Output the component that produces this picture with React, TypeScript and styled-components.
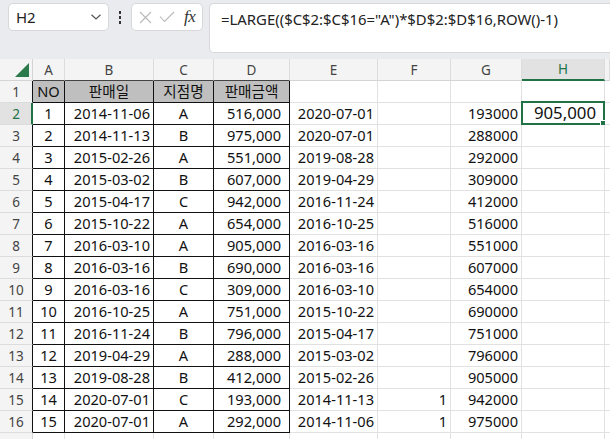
import React from "react";
import styled, { createGlobalStyle, css } from "styled-components";

const Global = createGlobalStyle`
  html, body { margin: 0; padding: 0; background: #ffffff; overflow: hidden; }
  body { font-family: "Noto Sans", "Noto Sans CJK KR", sans-serif; }
  * { box-sizing: border-box; }
`;

const GREEN = "#217346";
const COLS = "33px 32px 89px 60px 76px 88px 73px 71px 83px 1fr";

const Page = styled.div`
  width: 610px;
  height: 439px;
  overflow: hidden;
  background: #fff;
`;

const Toolbar = styled.div`
  height: 59px;
  background: #e9ebee;
  display: flex;
  align-items: flex-start;
  padding: 3px 0 0 8px;
`;

const NameBox = styled.div`
  width: 101px;
  height: 28px;
  background: #fff;
  border: 1px solid #d6d8db;
  border-radius: 5px;
  display: flex;
  align-items: center;
  justify-content: space-between;
  padding: 0 6px 0 7px;
  font-size: 15px;
  color: #222;
`;

const Dots = styled.div`
  width: 22px;
  height: 28px;
  display: flex;
  flex-direction: column;
  align-items: center;
  justify-content: center;
  gap: 2px;
`;

const Dot = styled.span`
  width: 2px;
  height: 3px;
  background: #333;
`;

const FxBox = styled.div`
  width: 72px;
  height: 28px;
  background: #fff;
  border: 1px solid #d6d8db;
  border-radius: 5px;
  display: flex;
  align-items: center;
  padding: 0 0 0 7px;
  gap: 7px;
`;

const Fx = styled.span`
  font-family: "Liberation Serif", "DejaVu Serif", serif;
  font-style: italic;
  font-size: 17px;
  color: #333;
  margin-left: 2px;
  letter-spacing: -0.5px;
`;

const FormulaBar = styled.div`
  margin-left: 6px;
  flex: 1;
  height: 50px;
  background: #fff;
  border: 1px solid #d6d8db;
  border-right: none;
  border-radius: 5px 0 0 5px;
  padding: 4px 0 0 11px;
  font-size: 14.9px;
  color: #222;
  white-space: nowrap;
  line-height: 22px;
`;

const Sheet = styled.div`
  display: flex;
  flex-direction: column;
`;

const Row = styled.div`
  display: grid;
  grid-template-columns: ${COLS};
  height: 22px;
`;

const ColHead = styled.div<{ $active?: boolean; $table?: boolean }>`
  background: ${(p) => (p.$active ? "#e2e2e2" : "#f4f4f4")};
  border-right: 1px solid #dcdcdc;
  border-bottom: 1px solid ${(p) => (p.$table ? "#444" : "#d4d4d4")};
  display: flex;
  align-items: center;
  justify-content: center;
  font-size: 13.5px;
  color: ${(p) => (p.$active ? GREEN : "#444")};
  ${(p) =>
    p.$active &&
    css`
      border-bottom: 2px solid ${GREEN};
    `}
`;

const Corner = styled.div`
  background: #f4f4f4;
  border-right: 1px solid #d4d4d4;
  border-bottom: 1px solid #d4d4d4;
  display: flex;
  align-items: flex-end;
  justify-content: flex-end;
  padding: 0 3px 3px 0;
`;

const RowHead = styled.div<{ $active?: boolean; $table?: boolean }>`
  background: ${(p) => (p.$active ? "#e2e2e2" : "#f4f4f4")};
  border-bottom: 1px solid #dcdcdc;
  border-right: ${(p) =>
    p.$active ? `2px solid ${GREEN}` : p.$table ? "1px solid #111" : "1px solid #d4d4d4"};
  display: flex;
  align-items: center;
  justify-content: center;
  font-size: 13.5px;
  color: ${(p) => (p.$active ? GREEN : "#444")};
  padding-left: ${(p) => (p.$active ? "1px" : "0")};
`;

type Align = "left" | "center" | "right";

const Cell = styled.div<{
  $align?: Align;
  $table?: boolean;
  $fill?: boolean;
  $money?: boolean;
  $big?: boolean;
}>`
  position: relative;
  border-right: 1px solid ${(p) => (p.$table ? "#111" : "#e1e1e1")};
  border-bottom: 1px solid ${(p) => (p.$table ? "#111" : "#e1e1e1")};
  background: ${(p) => (p.$fill ? "#bfbfbf" : "#fff")};
  display: flex;
  align-items: center;
  justify-content: ${(p) =>
    p.$align === "center" ? "center" : p.$align === "right" ? "flex-end" : "flex-start"};
  padding: 0 ${(p) => (p.$money ? "8px" : "3px")} 0 3px;
  font-size: ${(p) => (p.$big ? "16.8px" : "14.6px")};
  color: #111;
  white-space: nowrap;
  line-height: 1;
`;

const Selection = styled.div`
  position: absolute;
  left: -1px;
  top: -2px;
  right: -1px;
  bottom: -1px;
  border: 2px solid ${GREEN};
  pointer-events: none;
`;

const Handle = styled.div`
  position: absolute;
  right: -4px;
  bottom: -4px;
  width: 7px;
  height: 7px;
  background: ${GREEN};
  border: 1px solid #fff;
`;

const Chevron = () => (
  <svg width="12" height="8" viewBox="0 0 12 8">
    <path d="M1.5 1.8 L6 6 L10.5 1.8" fill="none" stroke="#555" strokeWidth="1.2" />
  </svg>
);

const XIcon = () => (
  <svg width="13" height="13" viewBox="0 0 13 13">
    <path d="M1 1 L12 12 M12 1 L1 12" stroke="#b9b9b9" strokeWidth="1.1" />
  </svg>
);

const CheckIcon = () => (
  <svg width="16" height="12" viewBox="0 0 16 12">
    <path d="M1 5.5 L5.5 10.5 L15 1" fill="none" stroke="#b9b9b9" strokeWidth="1.1" />
  </svg>
);

const Triangle = () => (
  <svg width="14" height="14" viewBox="0 0 14 14">
    <path d="M14 0 L14 14 L0 14 Z" fill="#2b7a4b" />
  </svg>
);

const data: [string, string, string, string, string, string, string][] = [
  ["1", "2014-11-06", "A", "516,000", "2020-07-01", "", "193000"],
  ["2", "2014-11-13", "B", "975,000", "2020-07-01", "", "288000"],
  ["3", "2015-02-26", "A", "551,000", "2019-08-28", "", "292000"],
  ["4", "2015-03-02", "B", "607,000", "2019-04-29", "", "309000"],
  ["5", "2015-04-17", "C", "942,000", "2016-11-24", "", "412000"],
  ["6", "2015-10-22", "A", "654,000", "2016-10-25", "", "516000"],
  ["7", "2016-03-10", "A", "905,000", "2016-03-16", "", "551000"],
  ["8", "2016-03-16", "B", "690,000", "2016-03-16", "", "607000"],
  ["9", "2016-03-16", "C", "309,000", "2016-03-10", "", "654000"],
  ["10", "2016-10-25", "A", "751,000", "2015-10-22", "", "690000"],
  ["11", "2016-11-24", "B", "796,000", "2015-04-17", "", "751000"],
  ["12", "2019-04-29", "A", "288,000", "2015-03-02", "", "796000"],
  ["13", "2019-08-28", "B", "412,000", "2015-02-26", "", "905000"],
  ["14", "2020-07-01", "C", "193,000", "2014-11-13", "1", "942000"],
  ["15", "2020-07-01", "A", "292,000", "2014-11-06", "1", "975000"],
];

const letters = ["A", "B", "C", "D", "E", "F", "G", "H"];

export default function App() {
  return (
    <Page>
      <Global />
      <Toolbar>
        <NameBox>
          <span>H2</span>
          <Chevron />
        </NameBox>
        <Dots>
          <Dot />
          <Dot />
          <Dot />
        </Dots>
        <FxBox>
          <XIcon />
          <CheckIcon />
          <Fx>fx</Fx>
        </FxBox>
        <FormulaBar>=LARGE(($C$2:$C$16="A")*$D$2:$D$16,ROW()-1)</FormulaBar>
      </Toolbar>
      <Sheet>
        <Row>
          <Corner>
            <Triangle />
          </Corner>
          {letters.map((l, i) => (
            <ColHead key={l} $active={l === "H"} $table={i < 4}>
              {l}
            </ColHead>
          ))}
          <ColHead />
        </Row>
        <Row>
          <RowHead $table>1</RowHead>
          <Cell $table $fill $align="center">NO</Cell>
          <Cell $table $fill $align="center">판매일</Cell>
          <Cell $table $fill $align="center">지점명</Cell>
          <Cell $table $fill $align="center">판매금액</Cell>
          <Cell />
          <Cell />
          <Cell />
          <Cell />
          <Cell />
        </Row>
        {data.map((r, i) => {
          const rowNum = i + 2;
          return (
            <Row key={rowNum}>
              <RowHead $table $active={rowNum === 2}>
                {rowNum}
              </RowHead>
              <Cell $table $align="center">{r[0]}</Cell>
              <Cell $table $align="right">{r[1]}</Cell>
              <Cell $table $align="center">{r[2]}</Cell>
              <Cell $table $align="right" $money>{r[3]}</Cell>
              <Cell $align="right">{r[4]}</Cell>
              <Cell $align="right">{r[5]}</Cell>
              <Cell $align="right">{r[6]}</Cell>
              <Cell $align="right" $money $big={rowNum === 2}>
                {rowNum === 2 && (
                  <>
                    905,000
                    <Selection>
                      <Handle />
                    </Selection>
                  </>
                )}
              </Cell>
              <Cell />
            </Row>
          );
        })}
        <Row>
          <RowHead />
          <Cell />
          <Cell />
          <Cell />
          <Cell />
          <Cell />
          <Cell />
          <Cell />
          <Cell />
          <Cell />
        </Row>
      </Sheet>
    </Page>
  );
}
